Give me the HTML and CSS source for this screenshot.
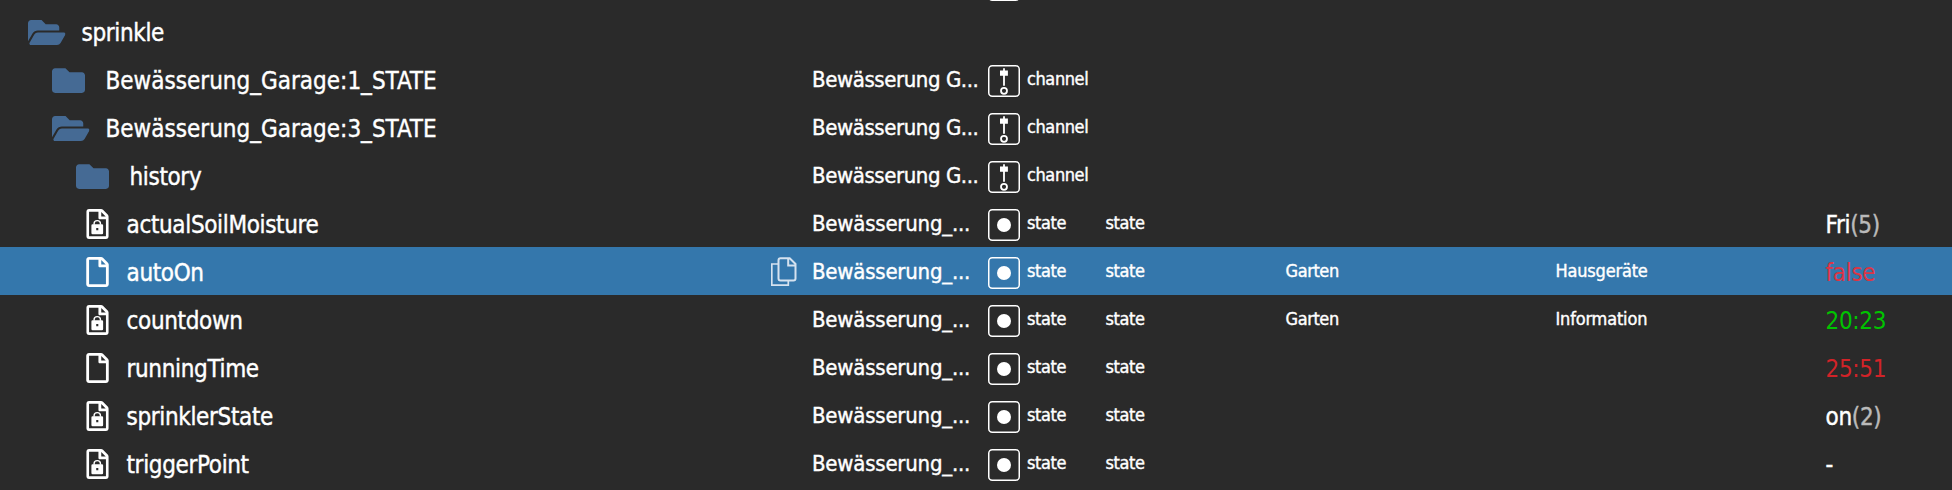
FILE: index.html
```html
<!DOCTYPE html>
<html lang="de">
<head>
    <meta charset="UTF-8">
    <title>Objects</title>
    <link rel="stylesheet" href="styles.css">
</head>
<body>
    <!-- shared icons -->
    <svg class="sprites">
        <symbol id="folder" viewBox="0 64 512 384">
            <path d="M464 128H272l-64-64H48C21 64 0 85 0 112v288c0 27 21 48 48 48h416c27 0 48-21 48-48V176c0-27-21-48-48-48z"/>
        </symbol>
        <symbol id="folderOpen" viewBox="0 64 576 384">
            <path d="M572.7 292.1L500.3 416.2A64 64 0 0 1 445 448H45c-18.500 0-30-20-20.700-36.100l72.400-124.100A64 64 0 0 1 152 256h400c18.500 0 30 20.100 20.700 36.100zM152 224h328v-48c0-26.500-21.500-48-48-48H272l-64-64H48C21.500 64 0 85.500 0 112v278l69-118.400C86.200 242.200 118 224 152 224z"/>
        </symbol>
        <symbol id="file" viewBox="0 0 384 512">
            <path d="M369.900 97.900L286 14C277 5 264.800 0 252.100 0H48C21.500 0 0 21.500 0 48v416c0 26.500 21.500 48 48 48h288c26.500 0 48-21.500 48-48V131.900c0-12.700-5.100-25-14.100-34zM332.100 128H256V51.900l76.100 76.100zM48 464V48h160v104c0 13.300 10.700 24 24 24h104v288H48z"/>
        </symbol>
        <symbol id="fileLock" viewBox="0 0 384 512">
            <use href="#file" width="384" height="512"/>
            <path fill-rule="evenodd" d="M108 262h160q20 0 20 20v128q0 22-20 22H108q-20 0-20-22V282q0-20 20-20zM170 326v36h36v-36z"/>
            <path d="M134 270v-22c0-66 108-66 108 0v22" fill="none" stroke="currentColor" stroke-width="24"/>
        </symbol>
        <symbol id="channel" viewBox="0 0 32 32">
            <rect x=".75" y=".75" width="30.500" height="30.500" rx="3.500" fill="none" stroke="currentColor" stroke-width="1.500"/>
            <path d="M15.100 3.300h1.800v2.200h3v5.300h-3v10h-1.800v-10H12V5.500h3.100z"/>
            <circle cx="16" cy="25.800" r="3" fill="none" stroke="currentColor" stroke-width="1.800"/>
        </symbol>
        <symbol id="state" viewBox="0 0 32 32">
            <rect x=".75" y=".75" width="30.500" height="30.500" rx="3.500" fill="none" stroke="currentColor" stroke-width="1.500"/>
            <circle cx="16" cy="16" r="7"/>
        </symbol>
        <symbol id="copy" viewBox="0 0 26 30">
            <path d="M7 7H.8v21.200h16.500V24" fill="none" stroke="currentColor" stroke-width="1.700"/>
            <path d="M9.500 1.200h9.200l5.800 5.800v14.500q0 2-2 2h-13q-2 0-2-2v-18.300q0-2 2-2zM17.200 1.500v7h7" fill="none" stroke="currentColor" stroke-width="2"/>
        </symbol>
    </svg>

    <div class="tree">
        <div class="row">
            <div class="id"></div>
            <div class="name"></div>
            <div class="type"><svg><use href="#state"/></svg></div>
        </div>
        <div class="row">
            <div class="id level1"><svg class="folder open"><use href="#folderOpen"/></svg><span>sprinkle</span></div>
        </div>
        <div class="row">
            <div class="id level2"><svg class="folder"><use href="#folder"/></svg><span>Bewässerung_Garage:1_STATE</span></div>
            <div class="name">Bewässerung G...</div>
            <div class="type"><svg><use href="#channel"/></svg>channel</div>
        </div>
        <div class="row">
            <div class="id level2"><svg class="folder open"><use href="#folderOpen"/></svg><span>Bewässerung_Garage:3_STATE</span></div>
            <div class="name">Bewässerung G...</div>
            <div class="type"><svg><use href="#channel"/></svg>channel</div>
        </div>
        <div class="row">
            <div class="id level3"><svg class="folder"><use href="#folder"/></svg><span>history</span></div>
            <div class="name">Bewässerung G...</div>
            <div class="type"><svg><use href="#channel"/></svg>channel</div>
        </div>
        <div class="row">
            <div class="id leaf"><svg class="file"><use href="#fileLock"/></svg><span>actualSoilMoisture</span></div>
            <div class="name wide">Bewässerung_...</div>
            <div class="type"><svg><use href="#state"/></svg>state</div>
            <div class="role">state</div>
            <div class="room"></div>
            <div class="func"></div>
            <div class="value">Fri<span class="raw">(5)</span></div>
        </div>
        <div class="row selected">
            <div class="id leaf"><svg class="file"><use href="#file"/></svg><span>autoOn</span><svg class="copy"><use href="#copy"/></svg></div>
            <div class="name wide">Bewässerung_...</div>
            <div class="type"><svg><use href="#state"/></svg>state</div>
            <div class="role">state</div>
            <div class="room">Garten</div>
            <div class="func">Hausgeräte</div>
            <div class="value false">false</div>
        </div>
        <div class="row">
            <div class="id leaf"><svg class="file"><use href="#fileLock"/></svg><span>countdown</span></div>
            <div class="name wide">Bewässerung_...</div>
            <div class="type"><svg><use href="#state"/></svg>state</div>
            <div class="role">state</div>
            <div class="room">Garten</div>
            <div class="func">Information</div>
            <div class="value green">20:23</div>
        </div>
        <div class="row">
            <div class="id leaf"><svg class="file"><use href="#file"/></svg><span>runningTime</span></div>
            <div class="name wide">Bewässerung_...</div>
            <div class="type"><svg><use href="#state"/></svg>state</div>
            <div class="role">state</div>
            <div class="room"></div>
            <div class="func"></div>
            <div class="value red">25:51</div>
        </div>
        <div class="row">
            <div class="id leaf"><svg class="file"><use href="#fileLock"/></svg><span>sprinklerState</span></div>
            <div class="name wide">Bewässerung_...</div>
            <div class="type"><svg><use href="#state"/></svg>state</div>
            <div class="role">state</div>
            <div class="room"></div>
            <div class="func"></div>
            <div class="value">on<span class="raw">(2)</span></div>
        </div>
        <div class="row">
            <div class="id leaf"><svg class="file"><use href="#fileLock"/></svg><span>triggerPoint</span></div>
            <div class="name wide">Bewässerung_...</div>
            <div class="type"><svg><use href="#state"/></svg>state</div>
            <div class="role">state</div>
            <div class="room"></div>
            <div class="func"></div>
            <div class="value">-</div>
        </div>
    </div>
</body>
</html>
```
FILE: styles.css
```css
html, body {
    height: 100%;
}

body {
    margin: 0;
    overflow: hidden;
    background-color: #2a2a2a;
    color: #fff;
    font-family: Tahoma, 'DejaVu Sans Condensed', 'DejaVu Sans', sans-serif;
    font-stretch: condensed;
    -webkit-text-stroke: 0.4px currentColor;
}

svg {
    fill: currentColor;
    flex: none;
}

.sprites {
    display: none;
}

/* list is scrolled, the row above is cut off */
.tree {
    margin-top: -41px;
}

.row {
    display: flex;
    height: 48px;
    white-space: nowrap;
}

.selected {
    background-color: #3477ac;
}

.id {
    display: flex;
    box-sizing: border-box;
    width: 812px;
    font-size: 24px;
    line-height: 53px;
    letter-spacing: -0.35px;
}

.level1 {
    padding-left: 28px;
}

.level2 {
    padding-left: 52px;
    letter-spacing: 0;
}

.level3 {
    padding-left: 76px;
}

.leaf {
    padding-left: 86px;
}

.folder {
    width: 33px;
    height: 25px;
    margin-top: 12.500px;
    margin-right: 20.500px;
    color: #456a94;
}

.open {
    width: 37.500px;
    margin-right: 16px;
}

.file {
    width: 23px;
    height: 30px;
    margin-top: 10px;
    margin-right: 17.500px;
}

.copy {
    width: 26px;
    height: 30px;
    margin: 10px 15px 0 auto;
    color: #d5e2ef;
}

.name {
    width: 176px;
    font-size: 22px;
    line-height: 49px;
    letter-spacing: -0.42px;
}

.wide {
    letter-spacing: -0.22px;
}

.type, .role, .room, .func {
    font-size: 18px;
    line-height: 48px;
    letter-spacing: -0.4px;
}

.type {
    display: flex;
    width: 117.500px;
}

.type svg {
    width: 32px;
    height: 32px;
    margin-top: 10px;
    margin-right: 7px;
}

.role {
    width: 180px;
}

.room {
    width: 270px;
}

.func {
    width: 270px;
    letter-spacing: -0.18px;
}

.value {
    font-size: 24px;
    line-height: 53px;
    letter-spacing: -0.3px;
}

.raw {
    color: #bababa;
}

.green {
    color: #00c400;
}

.red {
    color: #d12328;
}

.false {
    color: #dc3545;
}

.green, .red, .false {
    -webkit-text-stroke: 0;
}
```
